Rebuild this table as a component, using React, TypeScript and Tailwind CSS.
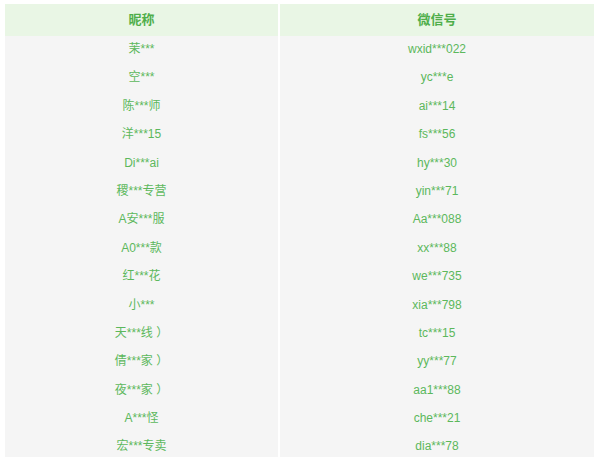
import React from "react";

const rows: [string, string][] = [
  ["茉***", "wxid***022"],
  ["空***", "yc***e"],
  ["陈***师", "ai***14"],
  ["洋***15", "fs***56"],
  ["Di***ai", "hy***30"],
  ["稷***专营", "yin***71"],
  ["A安***服", "Aa***088"],
  ["A0***款", "xx***88"],
  ["红***花", "we***735"],
  ["小***", "xia***798"],
  ["天***线 ）", "tc***15"],
  ["倩***家 ）", "yy***77"],
  ["夜***家 ）", "aa1***88"],
  ["A***怪", "che***21"],
  ["宏***专卖", "dia***78"],
];

export default function App() {
  return (
    <div
      className="w-[600px] h-[464px] bg-white pt-[4px] pl-[5px]"
      style={{ fontFamily: '"Liberation Sans", "Noto Sans CJK SC", sans-serif' }}
    >
      <div className="w-[589px] flex flex-col">
        <div className="flex gap-[2px] h-[32px]">
          <div className="w-[273px] bg-[#e9f6e5] flex items-center justify-center text-[13px] font-bold text-[#4fae4a]">
            昵称
          </div>
          <div className="flex-1 bg-[#e9f6e5] flex items-center justify-center text-[13px] font-bold text-[#4fae4a]">
            微信号
          </div>
        </div>
        <div className="flex gap-[2px] h-[421px] overflow-hidden">
          <div className="w-[273px] bg-[#f5f5f5] flex flex-col">
            {rows.map((r, i) => (
              <div key={i} className="h-[28.4px] shrink-0 flex justify-center leading-[26px] text-[12px] text-[#5cb85c]">
                {r[0]}
              </div>
            ))}
          </div>
          <div className="flex-1 bg-[#f5f5f5] flex flex-col">
            {rows.map((r, i) => (
              <div key={i} className="h-[28.4px] shrink-0 flex justify-center leading-[26px] text-[12px] text-[#5cb85c]">
                {r[1]}
              </div>
            ))}
          </div>
        </div>
      </div>
    </div>
  );
}
